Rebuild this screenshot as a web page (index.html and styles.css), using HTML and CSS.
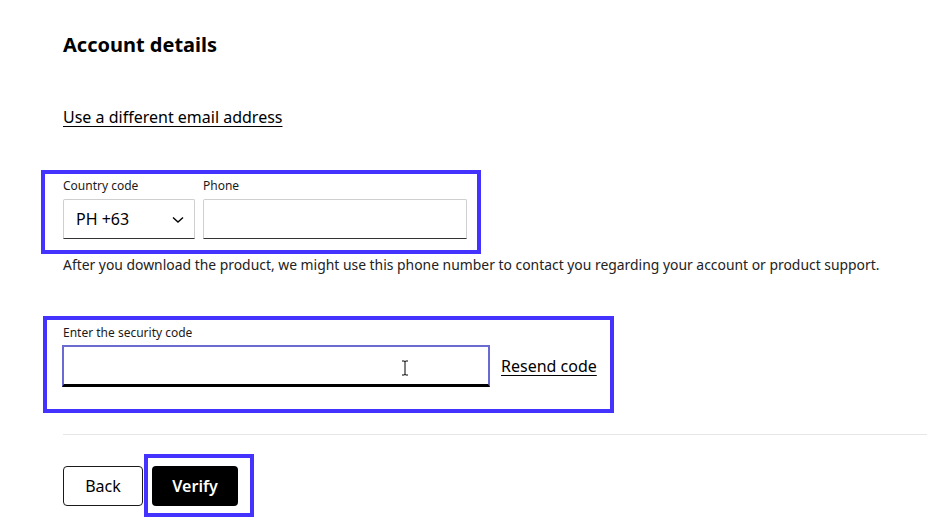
FILE: index.html
```html
<!DOCTYPE html>
<html lang="en">
<head>
<meta charset="utf-8">
<title>Account details</title>
<link rel="stylesheet" href="styles.css">
</head>
<body>
<main class="page">
  <h1 class="title">Account details</h1>
  <a class="link email-link" href="#">Use a different email address</a>

  <div class="phone-group hl hl-phone">
    <div class="field country">
      <label class="label">Country code</label>
      <div class="select">
        <span>PH +63</span>
        <svg class="chev" width="12" height="8" viewBox="0 0 12 8"><path d="M1 1.5 L6 6 L11 1.5" fill="none" stroke="#000" stroke-width="1.4"/></svg>
      </div>
    </div>
    <div class="field phone">
      <label class="label">Phone</label>
      <div class="input"></div>
    </div>
  </div>
  <p class="help">After you download the product, we might use this phone number to contact you regarding your account or product support.</p>

  <div class="code-group hl hl-code">
    <label class="label">Enter the security code</label>
    <div class="code-row">
      <div class="code-input">
        <svg class="ibeam" width="8" height="16" viewBox="0 0 8 16"><path d="M1 1 H3 Q4 1 4 2 V14 Q4 15 3 15 H1 M7 1 H5 Q4 1 4 2 M4 14 Q4 15 5 15 H7" fill="none" stroke="#000" stroke-width="1"/></svg>
      </div>
      <a class="link resend" href="#">Resend code</a>
    </div>
  </div>

  <hr class="divider">

  <div class="actions">
    <button class="btn btn-back">Back</button>
    <button class="btn btn-verify hl hl-verify">Verify</button>
  </div>
</main>
</body>
</html>
```

FILE: styles.css
```css
* { box-sizing: border-box; }
html, body { margin: 0; padding: 0; background: #fff; }
body {
  font-family: "Noto Sans", "Open Sans", sans-serif;
  color: #000;
  width: 951px;
  height: 528px;
  overflow: hidden;
}
.page {
  padding: 31px 24px 0 63px;
}
.title {
  margin: 0;
  font-size: 20px;
  line-height: 28px;
  font-weight: 700;
}
.link {
  color: #000;
  text-decoration: underline;
  text-underline-offset: 3px;
  text-decoration-thickness: 1px;
}
.email-link {
  display: inline-block;
  margin-top: 47px;
  font-size: 16px;
  line-height: 22px;
}
.hl { position: relative; }
.hl::after {
  content: "";
  position: absolute;
  border: 4px solid #4433ff;
  pointer-events: none;
}
.phone-group {
  display: flex;
  gap: 8px;
  width: 404px;
  margin-top: 50px;
}
.hl-phone::after { left: -22px; right: -14px; top: -8px; bottom: -15px; }
.field { display: flex; flex-direction: column; }
.country { width: 132px; }
.phone { width: 264px; }
.label {
  font-size: 12px;
  line-height: 16px;
  color: #1a1a1a;
  margin-bottom: 5px;
}
.select, .input {
  height: 40px;
  border: 1px solid #cfcfcf;
  border-bottom-color: #333;
  border-radius: 2px 2px 0 0;
}
.select {
  display: flex;
  align-items: center;
  justify-content: space-between;
  padding: 0 10px 0 12px;
  font-size: 16px;
}
.chev { margin-top: 1px; }
.help {
  margin: 17px 0 0;
  font-size: 13.9px;
  line-height: 18px;
  color: #222;
}
.code-group {
  display: inline-flex;
  flex-direction: column;
  margin-top: 51px;
}
.hl-code::after { left: -20px; right: -17px; top: -9px; bottom: -26px; }
.code-group .label { margin-bottom: 4px; }
.code-row {
  display: flex;
  align-items: center;
  gap: 11px;
  margin-left: -1px;
}
.code-input {
  position: relative;
  width: 428px;
  height: 42px;
  border: 2px solid #6a6ad0;
  border-bottom: 3px solid #000;
}
.ibeam { position: absolute; left: 337px; top: 13px; }
.resend {
  font-size: 16px;
  line-height: 22px;
}
.divider {
  margin: 47px 0 0;
  border: 0;
  border-top: 1px solid #e6e6e6;
}
.actions {
  display: flex;
  gap: 9px;
  margin-top: 31px;
}
.btn {
  height: 40px;
  border-radius: 4px;
  font-family: inherit;
  font-size: 16px;
  padding: 0;
  cursor: pointer;
}
.btn-back {
  width: 80px;
  background: #fff;
  border: 1px solid #1a1a1a;
  color: #000;
}
.btn-verify {
  width: 86px;
  background: #000;
  color: #fff;
  border: 0;
  font-weight: 600;
}
.hl-verify::after { left: -8px; right: -16px; top: -12px; bottom: -11px; border-radius: 0; }
```
